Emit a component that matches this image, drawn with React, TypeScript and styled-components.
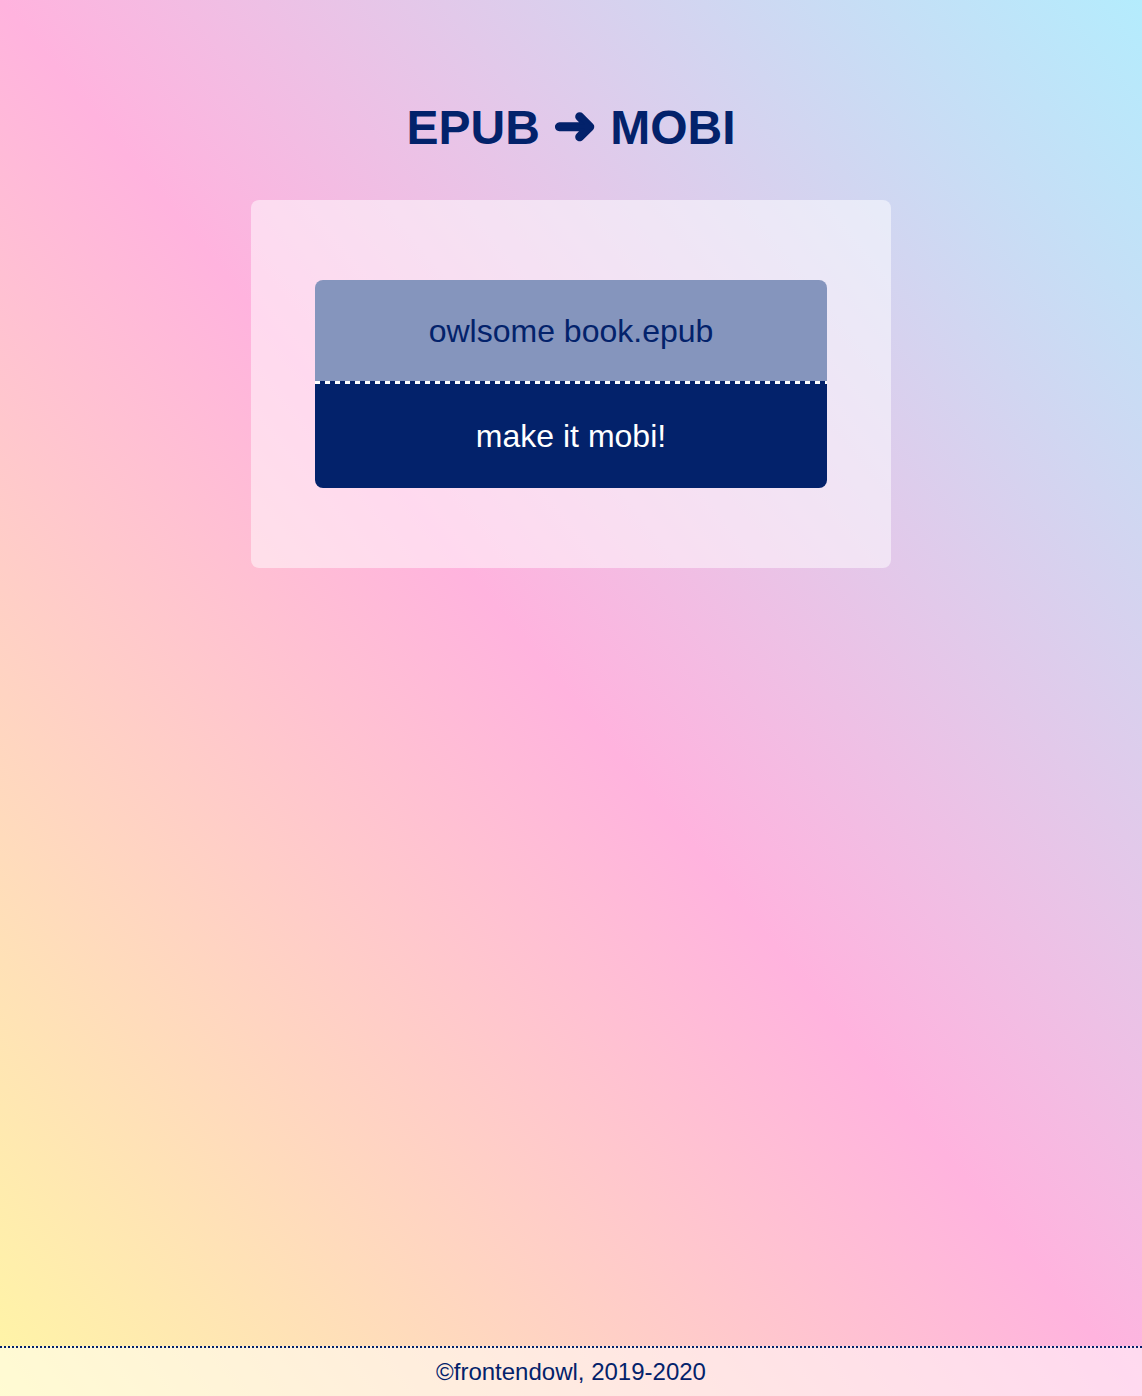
import React from "react";
import styled, { createGlobalStyle } from "styled-components";

const GlobalStyle = createGlobalStyle`
  html, body {
    margin: 0;
    padding: 0;
  }
  body {
    font-family: "Liberation Sans", Arial, Helvetica, sans-serif;
    color: #03226b;
  }
  * { box-sizing: border-box; }
`;

const Page = styled.div`
  min-height: 100vh;
  display: flex;
  flex-direction: column;
  background: linear-gradient(to top right, #fff6a5 0%, #ffb3de 50%, #b4ecfd 100%);
`;

const Main = styled.main`
  flex: 1;
  display: flex;
  flex-direction: column;
  align-items: center;
  padding-top: 100px;
`;

const Title = styled.h1`
  margin: 0 0 44px;
  font-size: 48px;
  line-height: 56px;
  font-weight: 700;
  color: #03226b;
`;

const Arrow = styled.span`
  display: inline-block;
  font-family: "DejaVu Sans", sans-serif;
  font-weight: 700;
  font-size: 52px;
  line-height: 1;
  -webkit-text-stroke: 2.5px #03226b;
  transform: translateY(-1px);
`;

const Card = styled.section`
  width: 640px;
  padding: 80px 64px;
  background: rgba(255, 255, 255, 0.5);
  border-radius: 8px;
`;

const Converter = styled.div`
  display: flex;
  flex-direction: column;
  border-radius: 8px;
  overflow: hidden;
`;

const FileBox = styled.label`
  height: 101px;
  display: flex;
  align-items: center;
  justify-content: center;
  background: #8595bd;
  color: #03226b;
  font-size: 32px;
  padding-top: 2px;
`;

const ConvertButton = styled.button`
  height: 107px;
  padding: 3px 0 0;
  border: none;
  display: flex;
  align-items: center;
  justify-content: center;
  color: #ffffff;
  font-family: "Liberation Sans", Arial, Helvetica, sans-serif;
  font-size: 32px;
  cursor: pointer;
  background:
    repeating-linear-gradient(90deg, #ffffff 0 5px, transparent 5px 10px) top left / 100% 3px no-repeat,
    #03226b;
`;

const Footer = styled.footer`
  height: 50px;
  border-top: 2px dotted #03226b;
  background: rgba(255, 255, 255, 0.5);
  display: flex;
  align-items: center;
  justify-content: center;
  font-size: 24px;
  color: #03226b;
`;

export default function App() {
  return (
    <>
      <GlobalStyle />
      <Page>
        <Main>
          <Title>
            EPUB <Arrow>➜</Arrow> MOBI
          </Title>
          <Card>
            <Converter>
              <FileBox>owlsome book.epub</FileBox>
              <ConvertButton>make it mobi!</ConvertButton>
            </Converter>
          </Card>
        </Main>
        <Footer>©frontendowl, 2019-2020</Footer>
      </Page>
    </>
  );
}
